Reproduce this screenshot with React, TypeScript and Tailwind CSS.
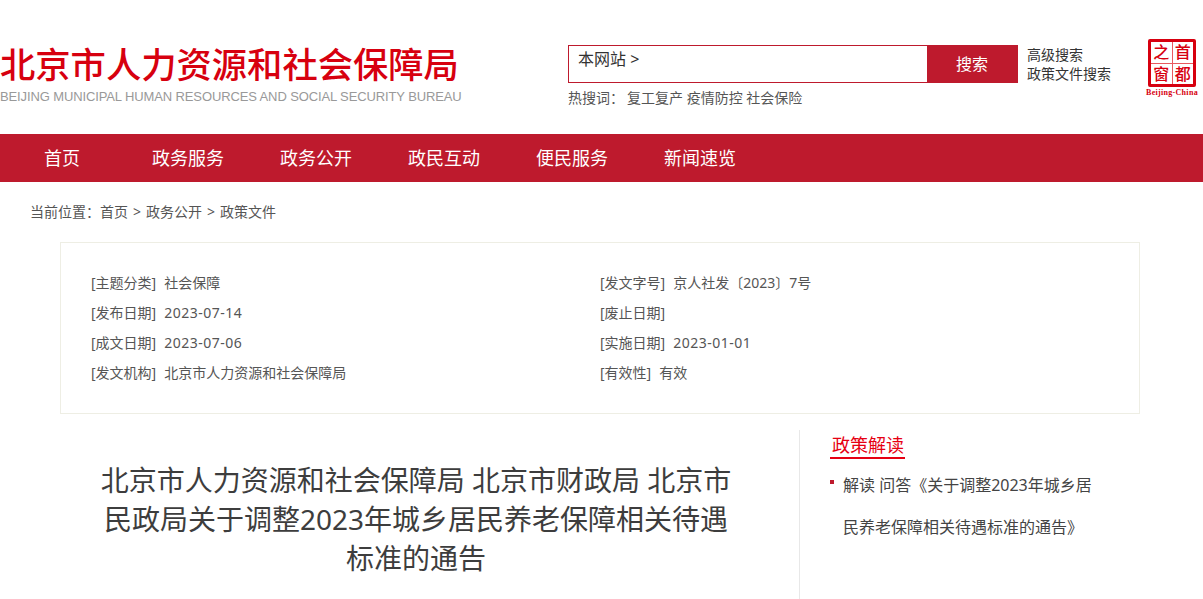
const fontStack = { fontFamily: '"Noto Sans", "Noto Sans CJK SC", sans-serif' };

const navItems = ["政务服务", "政务公开", "政民互动", "便民服务", "新闻速览"];

const metaLeft = [
  ["[主题分类]", "社会保障"],
  ["[发布日期]", "2023-07-14"],
  ["[成文日期]", "2023-07-06"],
  ["[发文机构]", "北京市人力资源和社会保障局"],
];

const metaRight = [
  ["[发文字号]", "京人社发〔2023〕7号"],
  ["[废止日期]", ""],
  ["[实施日期]", "2023-01-01"],
  ["[有效性]", "有效"],
];

function MetaColumn({ rows, className }: { rows: string[][]; className: string }) {
  return (
    <div className={className}>
      {rows.map(([label, value]) => (
        <div key={label} className="flex h-[30px] items-center gap-2 text-[14px] text-[#555]">
          <span>{label}</span>
          <span className={/^\d/.test(value) ? "tracking-[0.5px]" : ""}>{value}</span>
        </div>
      ))}
    </div>
  );
}

function CapitalLogo() {
  return (
    <div className="ml-[32px] mt-[39px] flex w-[56px] flex-col items-center">
      <div className="grid h-[48px] w-[48px] grid-cols-2 grid-rows-2 gap-px rounded-[2px] border-[3px] border-[#d7000f] bg-[#e85a5f] text-[16px] font-medium leading-none text-[#d7000f]">
        <span className="flex items-center justify-center bg-white">之</span>
        <span className="flex items-center justify-center bg-white">首</span>
        <span className="flex items-center justify-center bg-white">窗</span>
        <span className="flex items-center justify-center bg-white">都</span>
      </div>
      <span className="mt-[1px] whitespace-nowrap text-[8px] font-bold leading-[10px] tracking-[0.3px] text-[#d7000f] [font-family:'Liberation_Serif',serif]">
        Beijing-China
      </span>
    </div>
  );
}

export default function App() {
  return (
    <div className="h-[599px] w-[1203px] overflow-hidden bg-white" style={fontStack}>
      <header className="flex h-[134px]">
        <div className="w-[568px] shrink-0 pt-[41px]">
          <div className="whitespace-nowrap text-[35.3px] font-medium leading-[46px] text-[#d7000f]">
            北京市人力资源和社会保障局
          </div>
          <div className="mt-[1px] whitespace-nowrap text-[13px] leading-[18px] tracking-[-0.12px] text-[#999] [font-family:'Liberation_Sans',sans-serif]">
            BEIJING MUNICIPAL HUMAN RESOURCES AND SOCIAL SECURITY BUREAU
          </div>
        </div>

        <div className="w-[450px] shrink-0 pt-[45px]">
          <div className="flex h-[38px] border border-[#be1a2d]">
            <div className="flex-1 pl-[9px] pt-[1px] text-[16px] leading-[24px] text-[#333]">本网站 &gt;</div>
            <button className="w-[90px] bg-[#be1a2d] text-[16px] text-white">搜索</button>
          </div>
          <div className="mt-[5px] flex text-[14px] leading-[20px] text-[#555]">
            <span className="w-[59px]">热搜词：</span>
            <span>复工复产 疫情防控 社会保险</span>
          </div>
        </div>

        <div className="w-[94px] shrink-0 pl-[9px] pt-[45px] text-[14px] leading-[19px] text-[#333]">
          <div>高级搜索</div>
          <div className="whitespace-nowrap">政策文件搜索</div>
        </div>

        <CapitalLogo />
      </header>

      <nav className="flex h-[48px] items-center bg-[#be1a2d] pl-[44px] text-[18px] text-white">
        <span className="w-[108px]">首页</span>
        {navItems.map((item) => (
          <span key={item} className="w-[128px]">
            {item}
          </span>
        ))}
      </nav>

      <div className="flex h-[60px] items-center gap-[5px] pb-[2px] pl-[30px] text-[14px] text-[#555]">
        <span>当前位置：首页</span>
        <span>&gt;</span>
        <span>政务公开</span>
        <span>&gt;</span>
        <span>政策文件</span>
      </div>

      <section className="mx-[60px] flex h-[172px] w-[1080px] border border-[#eeeee4] pl-[30px] pt-[24px]">
        <MetaColumn rows={metaLeft} className="w-[509px]" />
        <MetaColumn rows={metaRight} className="flex-1" />
      </section>

      <div className="mt-[16px] flex pl-[60px]">
        <main className="w-[739px] pl-[36px] pr-[63px] pt-[31px]">
          <h1 className="text-center text-[28px] font-normal leading-[39px] text-[#3d3d3d]">
            北京市人力资源和社会保障局 北京市财政局 北京市民政局关于调整2023年城乡居民养老保障相关待遇标准的通告
          </h1>
        </main>

        <aside className="h-[170px] flex-1 border-l border-[#e8e8e8] pl-[30px] pt-[3px]">
          <h2 className="inline-block border-b-2 border-[#e60012] pl-[2px] pr-[1px] text-[18px] font-normal leading-[24px] text-[#e60012]">
            政策解读
          </h2>
          <div className="relative mt-[5px] w-[275px] pl-[13px] text-[16px] leading-[42px] text-[#444]">
            <span className="absolute left-0 top-[16px] h-[4px] w-[4px] bg-[#be1a2d]" />
            解读 问答《关于调整2023年城乡居民养老保障相关待遇标准的通告》
          </div>
        </aside>
      </div>
    </div>
  );
}
